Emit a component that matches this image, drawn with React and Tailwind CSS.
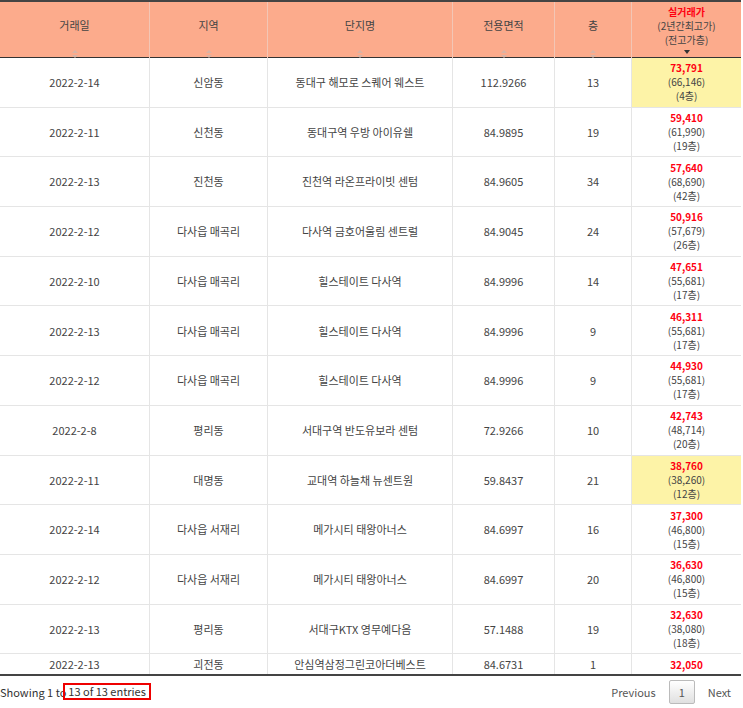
const rows = [
  ['2022-2-14', '신암동', '동대구 해모로 스퀘어 웨스트', '112.9266', '13', '73,791', '66,146', '4층', true],
  ['2022-2-11', '신천동', '동대구역 우방 아이유쉘', '84.9895', '19', '59,410', '61,990', '19층'],
  ['2022-2-13', '진천동', '진천역 라온프라이빗 센텀', '84.9605', '34', '57,640', '68,690', '42층'],
  ['2022-2-12', '다사읍 매곡리', '다사역 금호어울림 센트럴', '84.9045', '24', '50,916', '57,679', '26층'],
  ['2022-2-10', '다사읍 매곡리', '힐스테이트 다사역', '84.9996', '14', '47,651', '55,681', '17층'],
  ['2022-2-13', '다사읍 매곡리', '힐스테이트 다사역', '84.9996', '9', '46,311', '55,681', '17층'],
  ['2022-2-12', '다사읍 매곡리', '힐스테이트 다사역', '84.9996', '9', '44,930', '55,681', '17층'],
  ['2022-2-8', '평리동', '서대구역 반도유보라 센텀', '72.9266', '10', '42,743', '48,714', '20층'],
  ['2022-2-11', '대명동', '교대역 하늘채 뉴센트원', '59.8437', '21', '38,760', '38,260', '12층', true],
  ['2022-2-14', '다사읍 서재리', '메가시티 태왕아너스', '84.6997', '16', '37,300', '46,800', '15층'],
  ['2022-2-12', '다사읍 서재리', '메가시티 태왕아너스', '84.6997', '20', '36,630', '46,800', '15층'],
  ['2022-2-13', '평리동', '서대구KTX 영무예다음', '57.1488', '19', '32,630', '38,080', '18층'],
];

const Sort = ({ down }) => (
  <svg width="8" height="10" viewBox="0 0 8 10" className="mx-auto block">
    {down ? <path d="M1 3h6L4 7z" fill="#333" /> : <><path d="M1 4h6L4 1z" fill="#d8b4a6" /><path d="M1 6h6L4 9z" fill="#d8b4a6" /></>}
  </svg>
);

const td = 'border-r border-[#e5e5e5] text-center';
const L = 'block h-[14px] leading-[14px] overflow-visible whitespace-nowrap';

export default function App() {
  return (
    <div className="w-[743px] h-[708px] overflow-hidden bg-white text-[11px] text-[#444]" style={{ fontFamily: '"Noto Sans CJK KR", "Noto Sans", sans-serif' }}>
      <div className="w-[741px] border-t-2 border-[#444]">
        <div className="grid grid-cols-[150px_118px_185px_102px_77px_109px] h-[56px] bg-[#fcab8c] border-b border-[#333]">
          {['거래일', '지역', '단지명', '전용면적', '층'].map((h) => (
            <div key={h} className="border-r border-[#f3c6b5] flex flex-col items-center pt-[16px]">
              <span className="leading-[14px]">{h}</span>
              <div className="mt-[17px]"><Sort /></div>
            </div>
          ))}
          <div className="flex flex-col items-center pt-[3px] text-[10px]">
            <span className={`${L} text-[#f01] font-semibold`}>실거래가</span>
            <span className={L}>(2년간최고가)</span>
            <span className={L}>(전고가층)</span>
            <Sort down />
          </div>
        </div>
        {rows.map((r, i) => (
          <div key={i} className="grid grid-cols-[150px_118px_185px_102px_77px_109px] h-[49.7px] border-b border-[#e5e5e5]">
            {r.slice(0, 5).map((c, j) => (
              <div key={j} className={`${td} flex items-center justify-center`}>{c}</div>
            ))}
            <div className={`flex flex-col items-center justify-center text-[10px] ${r[8] ? 'bg-[#fdf3a7]' : ''}`}>
              <span className={`${L} text-[#f01] font-bold`}>{r[5]}</span>
              <span className={L}>({r[6]})</span>
              <span className={L}>({r[7]})</span>
            </div>
          </div>
        ))}
        <div className="grid grid-cols-[150px_118px_185px_102px_77px_109px] h-[22px] border-b-2 border-[#444]">
          {['2022-2-13', '괴전동', '안심역삼정그린코아더베스트', '84.6731', '1'].map((c, j) => (
            <div key={j} className={`${td} flex items-center justify-center`}>{c}</div>
          ))}
          <div className="flex items-center justify-center text-[10px] text-[#f01] font-bold">32,050</div>
        </div>
      </div>
      <div className="flex items-center justify-between w-[741px] h-[31px] text-[11px] text-[#333]">
        <div className="flex items-center">
          <span>Showing 1 to</span>
          <span className="border-2 border-[#e00] px-[3px] ml-[-3px] leading-[13px]">13 of 13 entries</span>
        </div>
        <div className="flex items-center gap-[13px] text-[#555]">
          <span>Previous</span>
          <span className="w-[26px] h-[24px] flex items-center justify-center border border-[#bbb] bg-gradient-to-b from-white to-[#e0e0e0] rounded-[2px]">1</span>
          <span className="mr-[10px]">Next</span>
        </div>
      </div>
    </div>
  );
}
